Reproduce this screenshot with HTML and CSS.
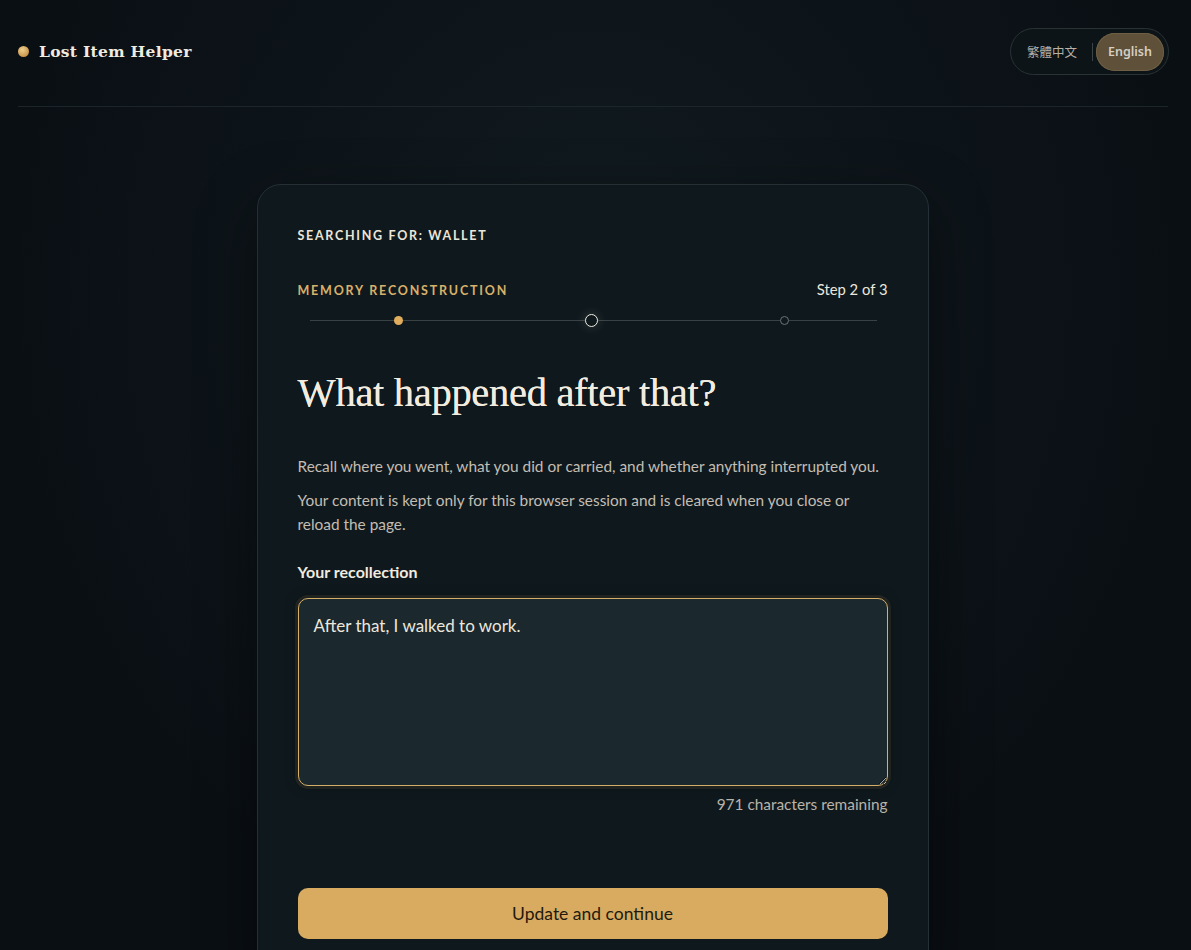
FILE: index.html
```html
<!DOCTYPE html>
<html lang="en">
  <head>
    <meta charset="UTF-8" />
    <meta name="viewport" content="width=device-width, initial-scale=1.0" />
    <title>Lost Item Helper</title>
    <link rel="stylesheet" href="styles.css">
  </head>
  <body>
    <header class="topbar">
      <div class="brand">
        <span class="brand-dot"></span>
        <span class="brand-name">Lost Item Helper</span>
      </div>
      <div class="lang-switch">
        <button class="lang-btn">繁體中文</button>
        <span class="lang-sep"></span>
        <button class="lang-btn active">English</button>
      </div>
    </header>

    <main class="main">
      <section class="card">
        <p class="searching">Searching for: Wallet</p>

        <div class="step-row">
          <span class="step-name">Memory reconstruction</span>
          <span class="step-count">Step 2 of 3</span>
        </div>
        <div class="progress">
          <span class="dot done"></span>
          <span class="dot current"></span>
          <span class="dot todo"></span>
        </div>

        <h1 class="question">What happened after that?</h1>

        <p class="hint">Recall where you went, what you did or carried, and whether anything interrupted you.</p>
        <p class="hint">Your content is kept only for this browser session and is cleared when you close or reload the page.</p>

        <label class="field-label" for="recollection">Your recollection</label>
        <textarea id="recollection" class="recollection" maxlength="1000">After that, I walked to work.</textarea>
        <p class="counter" id="counter">971 characters remaining</p>

        <button class="btn-continue">Update and continue</button>
      </section>
    </main>

    <script>
      const box = document.getElementById('recollection')
      const counter = document.getElementById('counter')
      box.addEventListener('input', function () {
        counter.textContent = (1000 - box.value.length) + ' characters remaining'
      })
    </script>
  </body>
</html>
```

FILE: styles.css
```css
* {
  margin: 0;
  padding: 0;
  box-sizing: border-box;
}

body {
  font-family: 'Lato', 'Noto Sans', sans-serif;
  background: radial-gradient(ellipse at 50% 30%, #111b20 0%, #0a0f14 70%);
  background-color: #0a0f14;
  min-height: 100vh;
  color: #e8e2d6;
  overflow: hidden;
}

.topbar {
  display: flex;
  justify-content: space-between;
  align-items: center;
  margin: 0 23px 0 18px;
  height: 107px;
  padding-bottom: 3px;
  border-bottom: 1px solid #1c252a;
}

.brand {
  display: flex;
  align-items: center;
  gap: 10px;
}

.brand-dot {
  width: 11px;
  height: 11px;
  border-radius: 50%;
  background: radial-gradient(circle at 40% 35%, #f0cf8e 0%, #c9974c 70%, #8a6430 100%);
}

.brand-name {
  font-family: 'DejaVu Serif', serif;
  font-weight: bold;
  font-size: 15.5px;
  color: #f0ebe0;
  letter-spacing: 0.3px;
}

.lang-switch {
  display: flex;
  align-items: center;
  height: 47px;
  padding: 4px;
  border: 1px solid #2a3236;
  border-radius: 24px;
  background: #0d1418;
  margin-right: -1px;
}

.lang-btn {
  border: none;
  background: none;
  font-family: 'Noto Sans', 'Noto Sans CJK TC', sans-serif;
  font-size: 12.5px;
  color: #b5b0a8;
  padding: 0 12px;
  height: 38px;
  border-radius: 19px;
  cursor: pointer;
}

.lang-btn.active {
  background: #5e5039;
  color: #d6cfc2;
  font-weight: 600;
  box-shadow: inset 0 0 0 1px #6e5f44;
}

.lang-sep {
  width: 1px;
  height: 18px;
  background: #3a4347;
  margin: 0 3px;
}

.main {
  display: flex;
  justify-content: center;
  padding-top: 77px;
  padding-right: 6px;
}

.card {
  width: 672px;
  background: #0f191d;
  border: 1px solid #253036;
  border-radius: 24px;
  padding: 43px 40px 40px;
  box-shadow: 0 20px 60px rgba(0, 0, 0, 0.45);
}

.searching {
  font-size: 12.5px;
  font-weight: bold;
  letter-spacing: 1.7px;
  text-transform: uppercase;
  color: #ebe5d9;
}

.step-row {
  display: flex;
  justify-content: space-between;
  align-items: baseline;
  margin-top: 37px;
}

.step-name {
  font-size: 12.5px;
  font-weight: bold;
  letter-spacing: 1.8px;
  text-transform: uppercase;
  color: #d8b06a;
}

.step-count {
  font-size: 14.8px;
  color: #ece7dd;
}

.progress {
  position: relative;
  display: flex;
  justify-content: space-between;
  align-items: center;
  margin: 14px 11px 0 12px;
  padding: 0 84px 0 84px;
  height: 16px;
}

.progress::before {
  content: '';
  position: absolute;
  left: 0;
  right: 0;
  top: 50%;
  height: 1px;
  background: #3a4145;
}

.dot {
  position: relative;
  border-radius: 50%;
}

.dot.done {
  width: 9px;
  height: 9px;
  background: #e0ad5e;
}

.dot.current {
  width: 13px;
  height: 13px;
  border: 1.5px solid #f2ede2;
  background: #0f191d;
  box-shadow: 0 0 8px 3px rgba(255, 255, 255, 0.08);
}

.dot.todo {
  width: 9px;
  height: 9px;
  border: 1px solid #6b7276;
  background: #0f191d;
  margin-right: 4px;
}

.question {
  font-family: 'Liberation Serif', 'DejaVu Serif', serif;
  font-weight: normal;
  font-size: 40.5px;
  color: #f2ece0;
  letter-spacing: -0.3px;
  margin-top: 41px;
  line-height: 1.2;
  text-shadow: 0 0 0.6px #f2ece0;
}

.hint {
  font-size: 15.4px;
  line-height: 24px;
  color: #c3bdb3;
}

.question + .hint {
  margin-top: 36px;
}

.hint + .hint {
  margin-top: 10px;
}

.field-label {
  display: block;
  font-size: 16px;
  font-weight: bold;
  color: #f0ebe0;
  margin-top: 26px;
}

.recollection {
  display: block;
  width: 100%;
  height: 188px;
  margin-top: 17px;
  padding: 16px 15px;
  background: #1b282d;
  border: 1.5px solid #d5ae67;
  border-radius: 10px;
  font-family: 'Lato', 'Noto Sans', sans-serif;
  font-size: 17px;
  color: #ece7dd;
  outline: none;
  box-shadow: 0 0 0 3px rgba(213, 174, 103, 0.1), 0 0 12px rgba(0, 0, 0, 0.5);
}

.counter {
  text-align: right;
  font-size: 15.4px;
  color: #b9b3a9;
  margin-top: 9px;
}

.btn-continue {
  display: block;
  width: 100%;
  height: 51px;
  margin-top: 75px;
  border: none;
  border-radius: 10px;
  background: #d8ab61;
  color: #221a0e;
  font-family: 'Lato', 'Noto Sans', sans-serif;
  font-size: 17.5px;
  cursor: pointer;
}
```
